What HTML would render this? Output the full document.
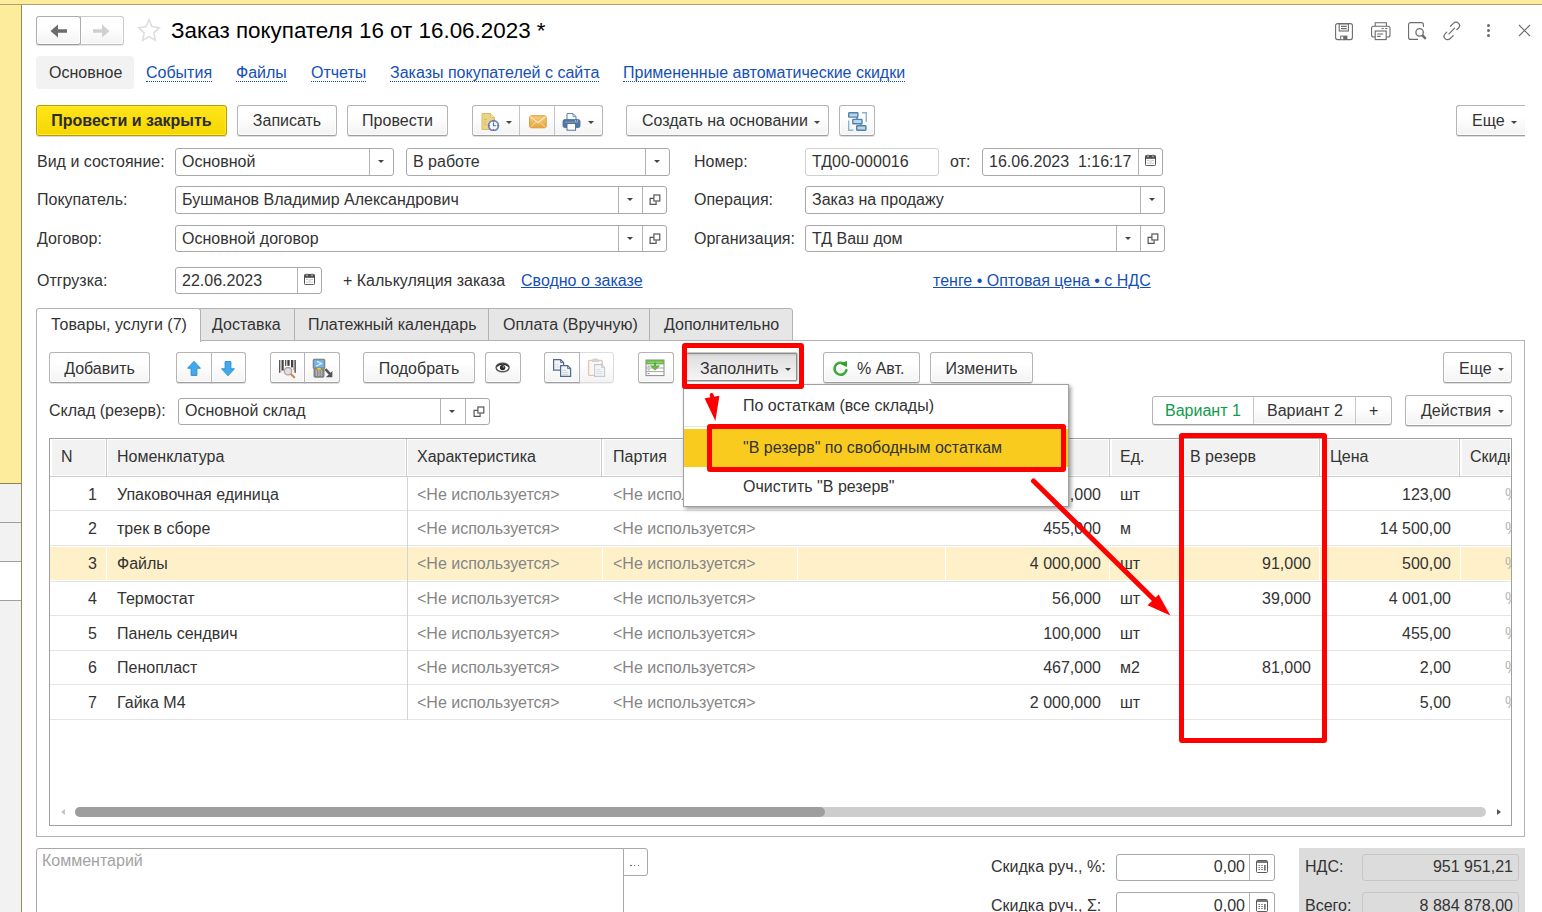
<!DOCTYPE html>
<html lang="ru">
<head>
<meta charset="utf-8">
<title>Заказ покупателя</title>
<style>
*{box-sizing:border-box;margin:0;padding:0}
html,body{width:1542px;height:912px;overflow:hidden;background:#fff}
body{font-family:"Liberation Sans",sans-serif;font-size:16px;color:#333;position:relative}
.a{position:absolute}
.t{position:absolute;white-space:pre;line-height:20px;height:20px}
.btn{position:absolute;height:31px;border:1px solid #b4b4b4;border-bottom-color:#9e9e9e;border-radius:3px;background:linear-gradient(#ffffff 0%,#ffffff 35%,#f3f3f3 100%);box-shadow:inset 0 0 0 1px #fff,0 1px 0 rgba(0,0,0,.13);text-align:center;line-height:28px;white-space:pre;color:#333}
.fld{position:absolute;height:28px;border:1px solid #a8a8a8;border-radius:3px;background:#fff;line-height:25px;padding-left:6px;white-space:pre;color:#333}
.fld i{position:absolute;top:0;bottom:0;width:1px;background:#b2b2b2}
.lnk{position:absolute;white-space:pre;line-height:20px;color:#1550b5}
.dot{border-bottom:1px dotted #1550b5;height:19px}
.arr{position:absolute;width:0;height:0;border-left:3.5px solid transparent;border-right:3.5px solid transparent;border-top:3.6px solid #444}
</style>
</head>
<body>
<div class="a" style="left:0px;top:0px;width:1542px;height:5px;background:#fcec9b;border-bottom:1px solid #aba36c"></div>
<div class="a" style="left:0px;top:5px;width:22px;height:478px;background:#fcec9b;border-right:1px solid #938b5a"></div>
<div class="a" style="left:0px;top:483px;width:22px;height:429px;background:#f2f2f2;border-right:1px solid #938b5a"></div>
<div class="a" style="left:0px;top:483px;width:21px;height:1px;background:#8e8555"></div>
<div class="a" style="left:0px;top:522px;width:21px;height:1px;background:#a0a0a0"></div>
<div class="a" style="left:0px;top:561px;width:21px;height:40px;background:#fff;border-top:1px solid #a0a0a0;border-bottom:1px solid #a0a0a0"></div>
<div class="btn" style="left:36px;top:16px;width:45px;height:29px;line-height:27px;border-color:#acacac;border-bottom-color:#9a9a9a;z-index:2"></div>
<div class="btn" style="left:80px;top:16px;width:44px;height:29px;line-height:27px;border-radius:0 3px 3px 0;border-color:#cbcbcb;border-bottom-color:#c0c0c0;box-shadow:inset 0 0 0 1px #fff,0 1px 0 rgba(0,0,0,.08)"></div>
<svg class="a" style="left:50px;top:23px;z-index:3" width="18" height="16" viewBox="0 0 18 16" ><path d="M0.5 8 L8 1.5 L8 6.2 L17 6.2 L17 9.8 L8 9.8 L8 14.5 Z" fill="#6c6c6c"/></svg>
<svg class="a" style="left:92.2px;top:23px;z-index:3" width="18" height="16" viewBox="0 0 18 16" ><path d="M17.5 8 L10 1.5 L10 6.2 L1 6.2 L1 9.8 L10 9.8 L10 14.5 Z" fill="#d0d0d0"/></svg>
<svg class="a" style="left:137px;top:18px;z-index:3" width="24" height="25" viewBox="0 0 24 25" ><path d="M12 1.8 L14.9 8.6 L22.2 9.7 L16.9 14.8 L18.3 22.2 L12 18.6 L5.7 22.2 L7.1 14.8 L1.8 9.7 L9.1 8.6 Z" fill="#fff" stroke="#dedede" stroke-width="1.6" stroke-linejoin="miter"/></svg>
<div class="t" style="left:171px;top:17px;font-size:22.4px;line-height:28px;height:28px;color:#000">Заказ покупателя 16 от 16.06.2023 *</div>
<svg class="a" style="left:1335px;top:22px;z-index:3" width="18" height="19" viewBox="0 0 18 19" fill="none" stroke="#6b6b6b" stroke-width="1.1"><rect x="0.6" y="1.6" width="16.8" height="16" rx="2"/><rect x="4.2" y="2" width="9.2" height="7" fill="#fff"/><path d="M6 4.4h5.8M6 6.6h5.8"/><rect x="5.2" y="13.6" width="7.2" height="4" fill="#6b6b6b" stroke="none"/><rect x="6.2" y="14.6" width="2" height="2.6" fill="#fff" stroke="none"/></svg>
<svg class="a" style="left:1371px;top:22px;z-index:3" width="20" height="19" viewBox="0 0 20 19" fill="none" stroke="#6b6b6b" stroke-width="1.1"><path d="M4.2 4.2V0.8h11.2v3.4"/><rect x="0.6" y="4.2" width="18.4" height="10.8" rx="2"/><path d="M10.6 6.6h2.2M14 6.6h2.4" stroke-width="1"/><rect x="4.2" y="9" width="11" height="8.6" fill="#fff"/><path d="M6.2 12h6M6.2 14.4h3.4" stroke-width="1.2"/></svg>
<svg class="a" style="left:1408px;top:22px;z-index:3" width="20" height="19" viewBox="0 0 20 19" fill="none" stroke="#6b6b6b" stroke-width="1.1"><path d="M10 17.4H2.6a2 2 0 0 1-2-2V2.6a2 2 0 0 1 2-2H13.4a2 2 0 0 1 2 2V5"/><circle cx="11.6" cy="10.4" r="3.7" stroke-width="1.3"/><path d="M14.2 13.2l3.6 3.6" stroke-width="2.4"/></svg>
<svg class="a" style="left:1442px;top:21px;z-index:3" width="20" height="20" viewBox="0 0 20 20" fill="none" stroke="#6b6b6b" stroke-width="1.2" stroke-linecap="round"><path d="M8.4 5.2l3.2-3.1a3.4 3.4 0 0 1 4.9 0.1a3.4 3.4 0 0 1 0 4.8l-1.7 1.7"/><path d="M11.2 14.6l-3.2 3.1a3.4 3.4 0 0 1-4.9-0.1a3.4 3.4 0 0 1 0-4.8l1.7-1.7"/><path d="M7 12.8l5.6-5.6"/></svg>
<div class="a" style="left:1487px;top:24px;width:3px;height:3px;border-radius:50%;background:#6b6b6b"></div>
<div class="a" style="left:1487px;top:29px;width:3px;height:3px;border-radius:50%;background:#6b6b6b"></div>
<div class="a" style="left:1487px;top:34px;width:3px;height:3px;border-radius:50%;background:#6b6b6b"></div>
<svg class="a" style="left:1518px;top:24px;z-index:3" width="13" height="13" viewBox="0 0 13 13" stroke="#6b6b6b" stroke-width="1.1"><path d="M1 1l11 11M12 1L1 12"/></svg>
<div class="a" style="left:36px;top:56px;width:98px;height:33px;background:#f2f2f2;border-radius:4px"></div>
<div class="t" style="left:49px;top:63px;">Основное</div>
<div class="lnk dot" style="left:146px;top:63px">События</div>
<div class="lnk dot" style="left:236px;top:63px">Файлы</div>
<div class="lnk dot" style="left:311px;top:63px">Отчеты</div>
<div class="lnk dot" style="left:390px;top:63px">Заказы покупателей с сайта</div>
<div class="lnk dot" style="left:623px;top:63px">Примененные автоматические скидки</div>
<div class="btn" style="left:36px;top:105px;width:191px;height:31px;line-height:29px;background:linear-gradient(#ffe519,#f5d603);border-color:#b69d00;box-shadow:inset 0 0 0 1px #ffe838,0 1px 0 rgba(0,0,0,.15);font-weight:bold;color:#2b2b2b">Провести и закрыть</div>
<div class="btn" style="left:237px;top:105px;width:100px;height:31px;line-height:29px;">Записать</div>
<div class="btn" style="left:347px;top:105px;width:101px;height:31px;line-height:29px;">Провести</div>
<div class="btn" style="left:472px;top:105px;width:131px;height:31px;line-height:29px;"></div>
<div class="a" style="left:519px;top:106px;width:1px;height:29px;background:#c4c4c4"></div>
<div class="a" style="left:554px;top:106px;width:1px;height:29px;background:#c4c4c4"></div>
<svg class="a" style="left:481px;top:113px;z-index:3" width="19" height="18" viewBox="0 0 19 18" ><path d="M1 0.5h8.5l4 4v12h-12.5z" fill="#ecd486" stroke="#d9bd62" stroke-width="1"/><path d="M9.5 0.5v4h4" fill="#f6e7b0" stroke="#d9bd62" stroke-width="0.8"/><path d="M3 6.5h3M3 9h2.5M3 11.5h2.5" stroke="#d6bc6a" stroke-width="1"/><circle cx="12.5" cy="12.6" r="5" fill="#f4f8fd" stroke="#5f8fc4" stroke-width="1.6"/><path d="M12.5 9.6v3.2h2.4" stroke="#4a78b0" stroke-width="1.1" fill="none"/><circle cx="12.5" cy="8.3" r="0.8" fill="#e33"/><circle cx="12.5" cy="16.9" r="0.8" fill="#e33"/><circle cx="8.2" cy="12.6" r="0.8" fill="#e33"/><circle cx="16.8" cy="12.6" r="0.8" fill="#e33"/></svg>
<div class="arr" style="left:505.5px;top:121.2px;border-top-color:#444"></div>
<svg class="a" style="left:529px;top:115px;z-index:3" width="18" height="14" viewBox="0 0 18 14" ><defs><linearGradient id="env" x1="0" y1="0" x2="0" y2="1"><stop offset="0" stop-color="#f3cd7e"/><stop offset="1" stop-color="#e6a53c"/></linearGradient></defs><rect x="0.6" y="0.8" width="16.6" height="12" rx="1.6" fill="url(#env)" stroke="#dc9a35" stroke-width="1"/><path d="M1.2 1.6l7.7 6.2l7.7-6.2" fill="none" stroke="#fbe9c3" stroke-width="1.2"/><path d="M1.4 12.2l5.6-5M16.4 12.2l-5.6-5" fill="none" stroke="#f7dca2" stroke-width="0.9"/></svg>
<svg class="a" style="left:562px;top:113px;z-index:3" width="19" height="18" viewBox="0 0 19 18" ><path d="M5 7V0.6h6l3 3V7" fill="#fff" stroke="#5c7fa8" stroke-width="1"/><path d="M11 0.6v3h3" fill="none" stroke="#5c7fa8" stroke-width="0.8"/><rect x="1" y="6.6" width="17" height="8" rx="1.8" fill="#4f78a6" stroke="#44698f" stroke-width="0.8"/><path d="M3 9.2h13" stroke="#7fa0c4" stroke-width="1"/><rect x="13" y="7.4" width="1" height="1" fill="#cfe0f0"/><rect x="15" y="7.4" width="1" height="1" fill="#cfe0f0"/><rect x="5" y="10.6" width="8.6" height="6.6" fill="#fff" stroke="#44698f" stroke-width="0.9"/></svg>
<div class="arr" style="left:587.5px;top:121.2px;border-top-color:#444"></div>
<div class="btn" style="left:626px;top:105px;width:203px;height:31px;line-height:29px;text-align:left;padding-left:15px">Создать на основании</div>
<div class="arr" style="left:814.0px;top:120.7px;border-top-color:#444"></div>
<div class="btn" style="left:839px;top:105px;width:36px;height:31px;line-height:29px;"></div>
<svg class="a" style="left:847px;top:111px;z-index:3" width="21" height="21" viewBox="0 0 21 21" ><path d="M15 1.7h4.3v9.6" fill="none" stroke="#8fb2cf" stroke-width="1.4"/><path d="M1.7 9.6v9.6h4.6" fill="none" stroke="#8fb2cf" stroke-width="1.4"/><path d="M10 6v2.6M13.7 13v2" stroke="#4f83ad" stroke-width="1.4"/><rect x="1.7" y="1.7" width="9.2" height="4.4" rx="0.6" fill="#bed5e8" stroke="#4f83ad" stroke-width="1.4"/><rect x="5.8" y="8.4" width="9.2" height="4.4" rx="0.6" fill="#bed5e8" stroke="#4f83ad" stroke-width="1.4"/><rect x="9.7" y="14.8" width="9.2" height="4.4" rx="0.6" fill="#bed5e8" stroke="#4f83ad" stroke-width="1.4"/></svg>
<div class="btn" style="left:1456px;top:105px;width:72px;height:31px;line-height:29px;text-align:left;padding-left:15px;border-right:0;border-radius:3px 0 0 3px">Еще</div>
<div class="arr" style="left:1511.0px;top:120.7px;border-top-color:#444"></div>
<div class="a" style="left:1525px;top:100px;width:17px;height:40px;background:#fff"></div>
<div class="t" style="left:37px;top:152px;">Вид и состояние:</div>
<div class="t" style="left:37px;top:190px;">Покупатель:</div>
<div class="t" style="left:37px;top:229px;">Договор:</div>
<div class="t" style="left:37px;top:271px;">Отгрузка:</div>
<div class="fld" style="left:175px;top:148px;width:219px;">Основной<i style="left:193px"></i></div>
<div class="arr" style="left:378.0px;top:160.0px;border-top-color:#444"></div>
<div class="fld" style="left:406px;top:148px;width:264px;">В работе<i style="left:238px"></i></div>
<div class="arr" style="left:653.5px;top:160.0px;border-top-color:#444"></div>
<div class="fld" style="left:175px;top:186px;width:492px;">Бушманов Владимир Александрович<i style="left:442px"></i><i style="left:466px"></i></div>
<div class="arr" style="left:626.5px;top:198.0px;border-top-color:#444"></div>
<svg class="a" style="left:649px;top:194px;z-index:3" width="12" height="12" viewBox="0 0 12 12" fill="none" stroke="#555" stroke-width="1.2"><path d="M4.9 4.3H1.1V10.3H7.1V7.4"/><rect x="4.9" y="1" width="5.9" height="6" fill="#fff"/></svg>
<div class="fld" style="left:175px;top:225px;width:492px;height:27px">Основной договор<i style="left:442px"></i><i style="left:466px"></i></div>
<div class="arr" style="left:626.5px;top:236.7px;border-top-color:#444"></div>
<svg class="a" style="left:649px;top:232.5px;z-index:3" width="12" height="12" viewBox="0 0 12 12" fill="none" stroke="#555" stroke-width="1.2"><path d="M4.9 4.3H1.1V10.3H7.1V7.4"/><rect x="4.9" y="1" width="5.9" height="6" fill="#fff"/></svg>
<div class="fld" style="left:175px;top:267px;width:147px;height:27px">22.06.2023<i style="left:121px"></i></div>
<svg class="a" style="left:304px;top:273px;z-index:3" width="11" height="12" viewBox="0 0 11 12" ><rect x="0.5" y="1.6" width="10" height="10" rx="1" fill="#fff" stroke="#4d4d4d" stroke-width="1"/><rect x="0.4" y="1.4" width="10.2" height="3.4" fill="#4d4d4d"/><path d="M3 0.2v2.2M8 0.2v2.2" stroke="#9c9c9c" stroke-width="1"/><path d="M3 2.2v1M8 2.2v1" stroke="#fff" stroke-width="1"/><path d="M2.5 6.4h6M2.5 9.2h6" stroke="#8a8a8a" stroke-width="1" stroke-dasharray="1 1.5"/><rect x="4.4" y="6" width="2.4" height="3.6" fill="#ddd"/></svg>
<div class="t" style="left:343px;top:271px;">+ Калькуляция заказа</div>
<div class="lnk" style="left:521px;top:271px;text-decoration:underline">Сводно о заказе</div>
<div class="t" style="left:694px;top:152px;">Номер:</div>
<div class="t" style="left:694px;top:190px;">Операция:</div>
<div class="t" style="left:694px;top:229px;">Организация:</div>
<div class="fld" style="left:805px;top:148px;width:134px;border-color:#d0d0d0">ТД00-000016</div>
<div class="t" style="left:950px;top:152px;">от:</div>
<div class="fld" style="left:982px;top:148px;width:181px;">16.06.2023  1:16:17<i style="left:155px"></i></div>
<svg class="a" style="left:1144.5px;top:154px;z-index:3" width="11" height="12" viewBox="0 0 11 12" ><rect x="0.5" y="1.6" width="10" height="10" rx="1" fill="#fff" stroke="#4d4d4d" stroke-width="1"/><rect x="0.4" y="1.4" width="10.2" height="3.4" fill="#4d4d4d"/><path d="M3 0.2v2.2M8 0.2v2.2" stroke="#9c9c9c" stroke-width="1"/><path d="M3 2.2v1M8 2.2v1" stroke="#fff" stroke-width="1"/><path d="M2.5 6.4h6M2.5 9.2h6" stroke="#8a8a8a" stroke-width="1" stroke-dasharray="1 1.5"/><rect x="4.4" y="6" width="2.4" height="3.6" fill="#ddd"/></svg>
<div class="fld" style="left:805px;top:186px;width:360px;">Заказ на продажу<i style="left:334px"></i></div>
<div class="arr" style="left:1148.5px;top:198.0px;border-top-color:#444"></div>
<div class="fld" style="left:805px;top:225px;width:360px;height:27px">ТД Ваш дом<i style="left:310px"></i><i style="left:334px"></i></div>
<div class="arr" style="left:1124.5px;top:236.7px;border-top-color:#444"></div>
<svg class="a" style="left:1146.5px;top:232.5px;z-index:3" width="12" height="12" viewBox="0 0 12 12" fill="none" stroke="#555" stroke-width="1.2"><path d="M4.9 4.3H1.1V10.3H7.1V7.4"/><rect x="4.9" y="1" width="5.9" height="6" fill="#fff"/></svg>
<div class="lnk" style="left:933px;top:271px;text-decoration:underline">тенге • Оптовая цена • с НДС</div>
<div class="a" style="left:36px;top:340px;width:1489px;height:497px;border:1px solid #b2b2b2;background:#fff"></div>
<div class="a" style="left:199px;top:308px;width:594px;height:33px;background:#e6e6e6;border:1px solid #b2b2b2;border-radius:0 3px 0 0"></div>
<div class="a" style="left:294px;top:309px;width:1px;height:31px;background:#b2b2b2"></div>
<div class="a" style="left:488px;top:309px;width:1px;height:31px;background:#b2b2b2"></div>
<div class="a" style="left:649px;top:309px;width:1px;height:31px;background:#b2b2b2"></div>
<div class="a" style="left:36px;top:308px;width:165px;height:34px;background:#fff;border:1px solid #b2b2b2;border-bottom:0;border-radius:3px 3px 0 0"></div>
<div class="t" style="left:51px;top:315px;">Товары, услуги (7)</div>
<div class="t" style="left:212px;top:315px;">Доставка</div>
<div class="t" style="left:308px;top:315px;">Платежный календарь</div>
<div class="t" style="left:503px;top:315px;">Оплата (Вручную)</div>
<div class="t" style="left:664px;top:315px;">Дополнительно</div>
<div class="btn" style="left:49px;top:352px;width:101px;height:31px;line-height:29px;padding-top:1px">Добавить</div>
<div class="btn" style="left:176px;top:352px;width:36px;height:31px;line-height:29px;border-radius:3px 0 0 3px"></div>
<div class="btn" style="left:211px;top:352px;width:35px;height:31px;line-height:29px;border-radius:0 3px 3px 0"></div>
<div class="btn" style="left:270px;top:352px;width:35px;height:31px;line-height:29px;border-radius:3px 0 0 3px"></div>
<div class="btn" style="left:304px;top:352px;width:36px;height:31px;line-height:29px;border-radius:0 3px 3px 0"></div>
<div class="btn" style="left:363px;top:352px;width:112px;height:31px;line-height:29px;padding-top:1px">Подобрать</div>
<div class="btn" style="left:485px;top:352px;width:36px;height:31px;line-height:29px;"></div>
<div class="btn" style="left:544px;top:352px;width:36px;height:31px;line-height:29px;border-radius:3px 0 0 3px;z-index:2"></div>
<div class="btn" style="left:579px;top:352px;width:35px;height:31px;line-height:29px;border-radius:0 3px 3px 0;border-color:#dcdcdc;box-shadow:0 1px 0 rgba(0,0,0,.05)"></div>
<div class="btn" style="left:638px;top:352px;width:36px;height:31px;line-height:29px;"></div>
<svg class="a" style="left:186px;top:360px;z-index:3" width="16" height="17" viewBox="0 0 16 17" ><path d="M8 1.3L14.4 8.2H10.9V15.4H5.1V8.2H1.6Z" fill="#41a9ec" stroke="#2f8fd2" stroke-width="1" stroke-linejoin="round"/></svg>
<svg class="a" style="left:220px;top:360px;z-index:3" width="16" height="17" viewBox="0 0 16 17" ><path d="M8 15.7L14.4 8.8H10.9V1.6H5.1V8.8H1.6Z" fill="#41a9ec" stroke="#2f8fd2" stroke-width="1" stroke-linejoin="round"/></svg>
<svg class="a" style="left:278px;top:359px;z-index:3" width="20" height="20" viewBox="0 0 20 20" ><rect x="1" y="1" width="1.3" height="12.8" fill="#555"/><rect x="2.3" y="1" width="1.4" height="12.4" fill="#bdbdbd"/><rect x="3.7" y="1" width="2" height="10.5" fill="#444"/><rect x="7" y="1" width="1" height="6" fill="#555"/><rect x="8" y="1" width="1.4" height="5.6" fill="#c4c4c4"/><rect x="9.4" y="1" width="2.2" height="5.8" fill="#3c3c3c"/><rect x="13" y="1" width="2" height="7.4" fill="#444"/><rect x="15" y="1" width="1.4" height="10" fill="#bdbdbd"/><rect x="16.4" y="1" width="1.5" height="12.8" fill="#555"/><path d="M12.6 14.8l3.6 3.4" stroke="#c08a5e" stroke-width="2.2" stroke-linecap="round"/><circle cx="10" cy="12.2" r="3.7" fill="#d2e2fb" stroke="#c99c7a" stroke-width="1.3"/></svg>
<svg class="a" style="left:312px;top:358px;z-index:3" width="22" height="20" viewBox="0 0 22 20" ><path d="M2.2 1.2h9.6q1 0 1 1v7.4q0 1-0.8 1.6v7q0 1-1 1h-8q-1 0-1-1v-7q-0.8-0.6-0.8-1.6V2.2q0-1 1-1z" fill="#8b8b8b" stroke="#6a6a6a" stroke-width="0.8"/><rect x="2.2" y="2.2" width="9.6" height="7" fill="#6db7ea"/><path d="M5 3.4l4.6 2.2l-5.4 2.6" fill="none" stroke="#d8ecfa" stroke-width="1.2"/><rect x="5.2" y="10" width="3.6" height="1.8" rx="0.6" fill="#f3d211"/><path d="M3.6 13h6.8M3.6 15h6.8M3.6 17h6.8" stroke="#d9d9d9" stroke-width="1" stroke-dasharray="1.4 1.2"/><path d="M13.4 11.2l5.6 6" stroke="#555" stroke-width="2.6"/><path d="M20.4 19.2v-6.2l-6.6 6.2z" fill="#555"/></svg>
<svg class="a" style="left:494px;top:361px;z-index:3" width="18" height="13" viewBox="0 0 18 13" ><ellipse cx="8.6" cy="6.5" rx="6.5" ry="4.3" fill="#fff" stroke="#5a5a5a" stroke-width="1.5"/><path d="M2.6 5.4Q8.6 0.9 14.6 5.4" fill="none" stroke="#2a2a2a" stroke-width="1.2"/><circle cx="8.6" cy="6.6" r="2.7" fill="#2a2a2a"/><circle cx="9.5" cy="5.8" r="0.9" fill="#999"/></svg>
<svg class="a" style="left:552px;top:358px;z-index:3" width="20" height="20" viewBox="0 0 20 20" ><path d="M1.6 1.6h7l3 3v7.6h-10z" fill="#f3f5f8" stroke="#52688a" stroke-width="1.2"/><path d="M8.6 1.6v3h3" fill="none" stroke="#52688a" stroke-width="0.9"/><path d="M3.4 6.5h3M3.4 9h5" stroke="#cdd3dc" stroke-width="0.8"/><path d="M8.6 7.6h7l3 3v7.8h-10z" fill="#f3f5f8" stroke="#52688a" stroke-width="1.2"/><path d="M15.6 7.6v3h3" fill="none" stroke="#52688a" stroke-width="0.9"/><path d="M10.4 12.5h3.4M10.4 14.5h6M10.4 16.5h6" stroke="#c2cad6" stroke-width="0.8"/></svg>
<svg class="a" style="left:587px;top:358px;z-index:3" width="20" height="20" viewBox="0 0 20 20" ><rect x="1.6" y="2.4" width="13.6" height="15" rx="1.2" fill="#fdf7f3" stroke="#e7c4ae" stroke-width="1.3"/><path d="M5 3.4q0-2.6 3.4-2.6t3.4 2.6z" fill="#d9dce2" stroke="#c3c7cf" stroke-width="0.8"/><path d="M7.6 6.6h7l3 3v8.8h-10z" fill="#f4f6f9" stroke="#c2cad6" stroke-width="1.1"/><path d="M14.6 6.6v3h3" fill="none" stroke="#c2cad6" stroke-width="0.9"/><path d="M9.4 11.6h4M9.4 13.6h6.4M9.4 15.6h6.4" stroke="#d5dae2" stroke-width="0.9"/></svg>
<svg class="a" style="left:645px;top:359px;z-index:3" width="20" height="18" viewBox="0 0 20 18" ><rect x="1" y="1" width="18" height="15.6" fill="#fff" stroke="#8a8a8a" stroke-width="1"/><rect x="1" y="1" width="18" height="4.4" fill="#6db84a"/><path d="M2.5 3.2h15" stroke="#a5d78c" stroke-width="1"/><path d="M1 9h18M1 12.6h18" stroke="#9a9a9a" stroke-width="0.9"/><path d="M2.6 7.2h2M2.6 10.8h2M2.6 14.6h2" stroke="#7d93ad" stroke-width="1"/><path d="M10 3.4v4" stroke="#4f9e33" stroke-width="1.6"/><path d="M5.4 6.8h9.2l-4.6 4.4z" fill="#6db84a" stroke="#55a238" stroke-width="0.6"/></svg>
<svg class="a" style="left:832px;top:360px;z-index:3" width="18" height="18" viewBox="0 0 18 18" ><path d="M14.4 10.2A6 6 0 1 1 11.4 3.4" fill="none" stroke="#3faa3c" stroke-width="2.6" stroke-linecap="round"/><path d="M9.4 3.9L14.6 1.4L14.6 6.4Z" fill="#2fa02c" stroke="#2fa02c" stroke-width="1" stroke-linejoin="round"/></svg>
<div class="btn" style="left:684px;top:352px;width:114px;height:30px;line-height:28px;text-align:left;padding-left:15px;padding-top:2px;border-radius:2px;background:linear-gradient(#dddddd,#f6f6f6);border-color:#c6c6c6;box-shadow:inset 0 0 0 1px #8f8f8f,inset 0 2px 2px rgba(0,0,0,.12)">Заполнить</div>
<div class="arr" style="left:784.5px;top:367.9px;border-top-color:#444"></div>
<div class="btn" style="left:823px;top:352px;width:97px;height:31px;line-height:29px;text-align:left;padding-left:33px;padding-top:1px">% Авт.</div>
<div class="btn" style="left:930px;top:352px;width:103px;height:31px;line-height:29px;padding-top:1px">Изменить</div>
<div class="btn" style="left:1443px;top:352px;width:69px;height:31px;line-height:29px;text-align:left;padding-left:15px;padding-top:1px">Еще</div>
<div class="arr" style="left:1497.5px;top:367.7px;border-top-color:#444"></div>
<div class="t" style="left:49px;top:401px;">Склад (резерв):</div>
<div class="fld" style="left:178px;top:398px;width:312px;height:27px;line-height:23px">Основной склад<i style="left:261px"></i><i style="left:286px"></i></div>
<div class="arr" style="left:448.5px;top:409.5px;border-top-color:#444"></div>
<svg class="a" style="left:472.5px;top:405.5px;z-index:3" width="12" height="12" viewBox="0 0 12 12" fill="none" stroke="#555" stroke-width="1.2"><path d="M4.9 4.3H1.1V10.3H7.1V7.4"/><rect x="4.9" y="1" width="5.9" height="6" fill="#fff"/></svg>
<div class="btn" style="left:1152px;top:396px;width:240px;height:29px;line-height:27px;"></div>
<div class="a" style="left:1153px;top:397px;width:100px;height:27px;background:#fff;border-radius:3px 0 0 3px"></div>
<div class="a" style="left:1253px;top:397px;width:1px;height:27px;background:#c8c8c8"></div>
<div class="a" style="left:1355px;top:397px;width:1px;height:27px;background:#c8c8c8"></div>
<div class="t" style="left:1165px;top:401px;color:#0f9a4c">Вариант 1</div>
<div class="t" style="left:1267px;top:401px;">Вариант 2</div>
<div class="t" style="left:1369px;top:401px;">+</div>
<div class="btn" style="left:1405px;top:395px;width:107px;height:31px;line-height:29px;text-align:left;padding-left:15px">Действия</div>
<div class="arr" style="left:1497.5px;top:410.2px;border-top-color:#444"></div>
<div class="a" style="left:49px;top:438px;width:1463px;height:388px;border:1px solid #a0a0a0;background:#fff"></div>
<div class="a" style="left:52px;top:440px;width:1458px;height:35px;background:#f2f2f2"></div>
<div class="a" style="left:50px;top:476px;width:1461px;height:1px;background:#cccccc"></div>
<div class="a" style="left:105px;top:439px;width:3px;height:37px;background:#fff"></div>
<div class="a" style="left:106px;top:439px;width:1px;height:37px;background:#cccccc"></div>
<div class="a" style="left:405px;top:439px;width:3px;height:37px;background:#fff"></div>
<div class="a" style="left:406px;top:439px;width:1px;height:37px;background:#cccccc"></div>
<div class="a" style="left:600px;top:439px;width:4px;height:37px;background:#fff"></div>
<div class="a" style="left:601px;top:439px;width:1px;height:37px;background:#cccccc"></div>
<div class="a" style="left:795px;top:439px;width:4px;height:37px;background:#fff"></div>
<div class="a" style="left:796px;top:439px;width:1px;height:37px;background:#cccccc"></div>
<div class="a" style="left:943px;top:439px;width:4px;height:37px;background:#fff"></div>
<div class="a" style="left:944px;top:439px;width:1px;height:37px;background:#cccccc"></div>
<div class="a" style="left:1108px;top:439px;width:4px;height:37px;background:#fff"></div>
<div class="a" style="left:1109px;top:439px;width:1px;height:37px;background:#cccccc"></div>
<div class="a" style="left:1181px;top:439px;width:4px;height:37px;background:#fff"></div>
<div class="a" style="left:1182px;top:439px;width:1px;height:37px;background:#cccccc"></div>
<div class="a" style="left:1318px;top:439px;width:4px;height:37px;background:#fff"></div>
<div class="a" style="left:1319px;top:439px;width:1px;height:37px;background:#cccccc"></div>
<div class="a" style="left:1458px;top:439px;width:4px;height:37px;background:#fff"></div>
<div class="a" style="left:1459px;top:439px;width:1px;height:37px;background:#cccccc"></div>
<div class="t" style="left:61px;top:447px;">N</div>
<div class="t" style="left:117px;top:447px;">Номенклатура</div>
<div class="t" style="left:417px;top:447px;">Характеристика</div>
<div class="t" style="left:613px;top:447px;">Партия</div>
<div class="t" style="left:1120px;top:447px;">Ед.</div>
<div class="t" style="left:1190px;top:447px;">В резерв</div>
<div class="t" style="left:1330px;top:447px;">Цена</div>
<div class="t" style="left:1470px;top:447px;width:40px;overflow:hidden">Скидк</div>
<div class="a" style="left:50px;top:510px;width:1461px;height:1px;background:#e4e4e4"></div>
<div class="t" style="left:56px;top:485px;width:41px;text-align:right">1</div>
<div class="t" style="left:117px;top:485px;">Упаковочная единица</div>
<div class="t" style="left:417px;top:485px;color:#858585">&lt;Не используется&gt;</div>
<div class="t" style="left:613px;top:485px;color:#858585">&lt;Не используется&gt;</div>
<div class="t" style="left:950px;top:485px;width:151px;text-align:right"><span style="visibility:hidden">1</span>,000</div>
<div class="t" style="left:1120px;top:485px;">шт</div>
<div class="t" style="left:1330px;top:485px;width:121px;text-align:right">123,00</div>
<div class="t" style="left:1505px;top:485px;width:6px;overflow:hidden;color:#b5b5b5">%</div>
<div class="a" style="left:50px;top:545px;width:1461px;height:1px;background:#e4e4e4"></div>
<div class="t" style="left:56px;top:519px;width:41px;text-align:right">2</div>
<div class="t" style="left:117px;top:519px;">трек в сборе</div>
<div class="t" style="left:417px;top:519px;color:#858585">&lt;Не используется&gt;</div>
<div class="t" style="left:613px;top:519px;color:#858585">&lt;Не используется&gt;</div>
<div class="t" style="left:950px;top:519px;width:151px;text-align:right">455,000</div>
<div class="t" style="left:1120px;top:519px;">м</div>
<div class="t" style="left:1330px;top:519px;width:121px;text-align:right">14 500,00</div>
<div class="t" style="left:1505px;top:519px;width:6px;overflow:hidden;color:#b5b5b5">%</div>
<div class="a" style="left:50px;top:547px;width:1461px;height:33px;background:#fef1c9"></div>
<div class="a" style="left:106px;top:547px;width:1px;height:33px;background:#fff"></div>
<div class="a" style="left:602px;top:547px;width:1px;height:33px;background:#fff"></div>
<div class="a" style="left:797px;top:547px;width:1px;height:33px;background:#fff"></div>
<div class="a" style="left:945px;top:547px;width:1px;height:33px;background:#fff"></div>
<div class="a" style="left:1109px;top:547px;width:1px;height:33px;background:#fff"></div>
<div class="a" style="left:1183px;top:547px;width:1px;height:33px;background:#fff"></div>
<div class="a" style="left:1319px;top:547px;width:1px;height:33px;background:#fff"></div>
<div class="a" style="left:1460px;top:547px;width:1px;height:33px;background:#fff"></div>
<div class="a" style="left:50px;top:581px;width:1461px;height:1px;background:#e4e4e4"></div>
<div class="t" style="left:56px;top:554px;width:41px;text-align:right">3</div>
<div class="t" style="left:117px;top:554px;">Файлы</div>
<div class="t" style="left:417px;top:554px;color:#858585">&lt;Не используется&gt;</div>
<div class="t" style="left:613px;top:554px;color:#858585">&lt;Не используется&gt;</div>
<div class="t" style="left:950px;top:554px;width:151px;text-align:right">4 000,000</div>
<div class="t" style="left:1120px;top:554px;">шт</div>
<div class="t" style="left:1190px;top:554px;width:121px;text-align:right">91,000</div>
<div class="t" style="left:1330px;top:554px;width:121px;text-align:right">500,00</div>
<div class="t" style="left:1505px;top:554px;width:6px;overflow:hidden;color:#b5b5b5">%</div>
<div class="a" style="left:50px;top:615px;width:1461px;height:1px;background:#e4e4e4"></div>
<div class="t" style="left:56px;top:589px;width:41px;text-align:right">4</div>
<div class="t" style="left:117px;top:589px;">Термостат</div>
<div class="t" style="left:417px;top:589px;color:#858585">&lt;Не используется&gt;</div>
<div class="t" style="left:613px;top:589px;color:#858585">&lt;Не используется&gt;</div>
<div class="t" style="left:950px;top:589px;width:151px;text-align:right">56,000</div>
<div class="t" style="left:1120px;top:589px;">шт</div>
<div class="t" style="left:1190px;top:589px;width:121px;text-align:right">39,000</div>
<div class="t" style="left:1330px;top:589px;width:121px;text-align:right">4 001,00</div>
<div class="t" style="left:1505px;top:589px;width:6px;overflow:hidden;color:#b5b5b5">%</div>
<div class="a" style="left:50px;top:650px;width:1461px;height:1px;background:#e4e4e4"></div>
<div class="t" style="left:56px;top:624px;width:41px;text-align:right">5</div>
<div class="t" style="left:117px;top:624px;">Панель сендвич</div>
<div class="t" style="left:417px;top:624px;color:#858585">&lt;Не используется&gt;</div>
<div class="t" style="left:613px;top:624px;color:#858585">&lt;Не используется&gt;</div>
<div class="t" style="left:950px;top:624px;width:151px;text-align:right">100,000</div>
<div class="t" style="left:1120px;top:624px;">шт</div>
<div class="t" style="left:1330px;top:624px;width:121px;text-align:right">455,00</div>
<div class="t" style="left:1505px;top:624px;width:6px;overflow:hidden;color:#b5b5b5">%</div>
<div class="a" style="left:50px;top:684px;width:1461px;height:1px;background:#e4e4e4"></div>
<div class="t" style="left:56px;top:658px;width:41px;text-align:right">6</div>
<div class="t" style="left:117px;top:658px;">Пенопласт</div>
<div class="t" style="left:417px;top:658px;color:#858585">&lt;Не используется&gt;</div>
<div class="t" style="left:613px;top:658px;color:#858585">&lt;Не используется&gt;</div>
<div class="t" style="left:950px;top:658px;width:151px;text-align:right">467,000</div>
<div class="t" style="left:1120px;top:658px;">м2</div>
<div class="t" style="left:1190px;top:658px;width:121px;text-align:right">81,000</div>
<div class="t" style="left:1330px;top:658px;width:121px;text-align:right">2,00</div>
<div class="t" style="left:1505px;top:658px;width:6px;overflow:hidden;color:#b5b5b5">%</div>
<div class="a" style="left:50px;top:719px;width:1461px;height:1px;background:#e4e4e4"></div>
<div class="t" style="left:56px;top:693px;width:41px;text-align:right">7</div>
<div class="t" style="left:117px;top:693px;">Гайка М4</div>
<div class="t" style="left:417px;top:693px;color:#858585">&lt;Не используется&gt;</div>
<div class="t" style="left:613px;top:693px;color:#858585">&lt;Не используется&gt;</div>
<div class="t" style="left:950px;top:693px;width:151px;text-align:right">2 000,000</div>
<div class="t" style="left:1120px;top:693px;">шт</div>
<div class="t" style="left:1330px;top:693px;width:121px;text-align:right">5,00</div>
<div class="t" style="left:1505px;top:693px;width:6px;overflow:hidden;color:#b5b5b5">%</div>
<div class="a" style="left:407px;top:477px;width:1px;height:243px;background:#d4d4d4"></div>
<div class="a" style="left:75px;top:807px;width:1411px;height:10px;border-radius:5px;background:#cdcdcd"></div>
<div class="a" style="left:75px;top:807px;width:750px;height:10px;border-radius:5px;background:#9e9e9e"></div>
<div class="a" style="left:61px;top:808.5px;width:0px;height:0px;border-top:3.5px solid transparent;border-bottom:3.5px solid transparent;border-right:4px solid #c4c4c4"></div>
<div class="a" style="left:1496.5px;top:808.5px;width:0px;height:0px;border-top:3.5px solid transparent;border-bottom:3.5px solid transparent;border-left:4px solid #555"></div>
<div class="a" style="left:36px;top:848px;width:588px;height:80px;border:1px solid #a8a8a8;border-radius:3px 0 0 0;background:#fff"></div>
<div class="t" style="left:42px;top:851px;color:#a3a3a3">Комментарий</div>
<div class="a" style="left:623px;top:848px;width:25px;height:28px;border:1px solid #a8a8a8;border-radius:0 3px 3px 0;background:#fff"></div>
<div class="a" style="left:630.4px;top:865px;width:1.4px;height:1.4px;background:#6e6e6e"></div>
<div class="a" style="left:634px;top:865px;width:1.4px;height:1.4px;background:#6e6e6e"></div>
<div class="a" style="left:637.6px;top:865px;width:1.4px;height:1.4px;background:#6e6e6e"></div>
<div class="t" style="left:991px;top:857px;">Скидка руч., %:</div>
<div class="fld" style="left:1116px;top:854px;width:159px;height:27px;line-height:24px;text-align:right;padding-right:29px">0,00<i style="left:132px"></i></div>
<svg class="a" style="left:1255.5px;top:859.5px;z-index:3" width="12" height="13" viewBox="0 0 12 13" ><rect x="0.5" y="0.5" width="11" height="12" rx="1" fill="#fff" stroke="#5a5a5a"/><rect x="1" y="1" width="10" height="2" fill="#777"/><path d="M2.5 5.5h7M2.5 7.5h7M2.5 9.5h7" stroke="#666" stroke-width="1" stroke-dasharray="1.4 1.4"/><rect x="8" y="5" width="1.6" height="5.6" fill="#777"/></svg>
<div class="t" style="left:991px;top:896px;">Скидка руч., Σ:</div>
<div class="fld" style="left:1116px;top:892px;width:159px;height:27px;line-height:26px;text-align:right;padding-right:29px">0,00<i style="left:132px"></i></div>
<svg class="a" style="left:1255.5px;top:898.5px;z-index:3" width="12" height="13" viewBox="0 0 12 13" ><rect x="0.5" y="0.5" width="11" height="12" rx="1" fill="#fff" stroke="#5a5a5a"/><rect x="1" y="1" width="10" height="2" fill="#777"/><path d="M2.5 5.5h7M2.5 7.5h7M2.5 9.5h7" stroke="#666" stroke-width="1" stroke-dasharray="1.4 1.4"/><rect x="8" y="5" width="1.6" height="5.6" fill="#777"/></svg>
<div class="a" style="left:1299px;top:848px;width:226px;height:70px;background:#dcdcdc"></div>
<div class="t" style="left:1305px;top:857px;">НДС:</div>
<div class="fld" style="left:1362px;top:854px;width:157px;height:27px;line-height:24px;text-align:right;padding-right:5px;background:#dcdcdc;border-color:#c6c6c6">951 951,21</div>
<div class="t" style="left:1305px;top:896px;">Всего:</div>
<div class="fld" style="left:1362px;top:892px;width:157px;height:27px;line-height:26px;text-align:right;padding-right:5px;background:#dcdcdc;border-color:#c6c6c6">8 884 878,00</div>
<div class="a" style="left:0;top:0;width:1542px;height:912px;z-index:5">
<div class="a" style="left:683px;top:384px;width:386px;height:123px;background:#fff;border:1px solid #a0a0a0;box-shadow:2px 2px 4px rgba(0,0,0,.38)"></div>
<div class="a" style="left:684px;top:429px;width:384px;height:38px;background:#f9cb1f"></div>
<div class="a" style="left:684px;top:426px;width:384px;height:1px;background:#e3e3e3"></div>
<div class="t" style="left:743px;top:396px;">По остаткам (все склады)</div>
<div class="t" style="left:743px;top:438px;">"В резерв" по свободным остаткам</div>
<div class="t" style="left:743px;top:477px;">Очистить "В резерв"</div>
<div class="a" style="left:682px;top:343px;width:122px;height:46px;border:5px solid #fe0000;border-radius:3px"></div>
<div class="a" style="left:707px;top:424px;width:359px;height:48px;border:5px solid #fe0000;border-radius:3px"></div>
<div class="a" style="left:1179px;top:433px;width:148px;height:310px;border:5px solid #fe0000;border-radius:3px"></div>
<svg class="a" style="left:0;top:0" width="1542" height="912" viewBox="0 0 1542 912"><path d="M1033.5 481 L1155 600.5" stroke="#fe0000" stroke-width="5" stroke-linecap="round"/><path d="M1170.4 615.6 L1147.5 605.2 L1158.7 594.4 Z" fill="#fe0000"/><path d="M711.7 395 L713 402" stroke="#fe0000" stroke-width="4" stroke-linecap="round"/><path d="M704.6 398.2 L719.4 395.8 L715.4 421 Z" fill="#fe0000"/></svg>
</div>
</body>
</html>
